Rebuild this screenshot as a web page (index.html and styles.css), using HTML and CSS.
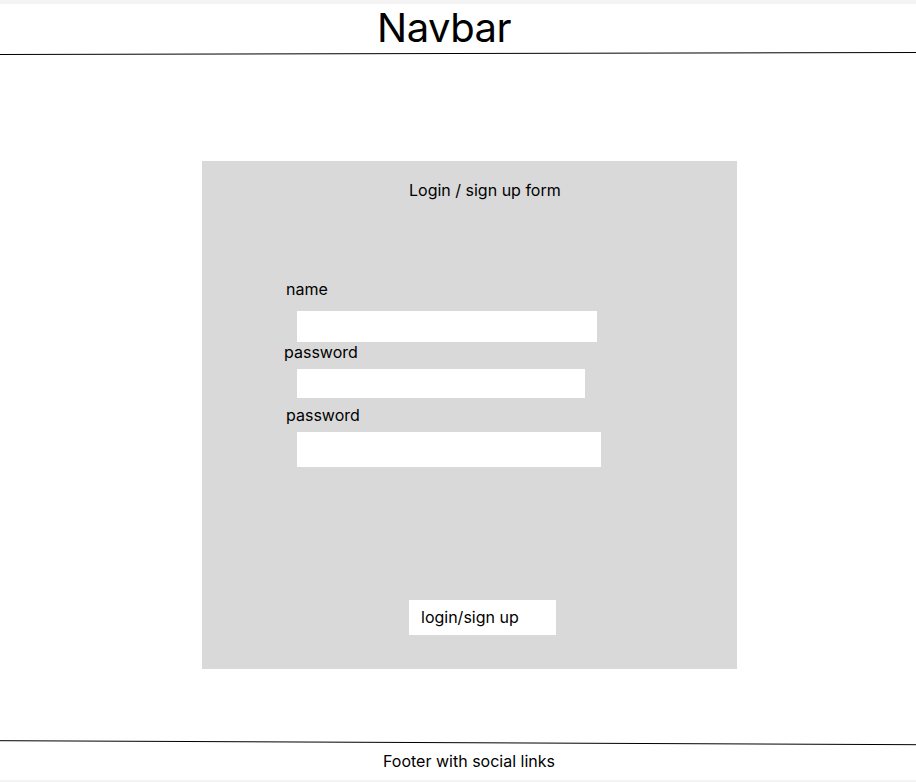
FILE: index.html
```html
<!DOCTYPE html>
<html>
<head>
<meta charset="utf-8">
<link rel="stylesheet" href="styles.css">
</head>
<body>
<div class="page">
  <div class="strip"></div>
  <header class="navbar">
    <div class="nav-title">Navbar</div>
  </header>
  <svg class="rule" width="916" height="4" viewBox="0 0 916 4"><line x1="0" y1="2.5" x2="916" y2="0.5" stroke="#000" stroke-width="1"/></svg>
  <main class="main">
    <section class="card">
      <div class="card-title">Login / sign up form</div>
      <div class="label label-name">name</div>
      <div class="input input-name"></div>
      <div class="label label-pw1">password</div>
      <div class="input input-pw1"></div>
      <div class="label label-pw2">password</div>
      <div class="input input-pw2"></div>
      <div class="button">login/sign up</div>
    </section>
  </main>
  <svg class="rule" width="916" height="6" viewBox="0 0 916 6"><line x1="0" y1="0.7" x2="916" y2="4.7" stroke="#000" stroke-width="1"/></svg>
  <footer class="footer">Footer with social links</footer>
  <div class="strip strip-bottom"></div>
</div>
</body>
</html>
```
FILE: styles.css
```css
html, body {
  margin: 0;
  padding: 0;
  background: #fff;
}
body {
  font-family: Inter, "Noto Sans", sans-serif;
  color: #000;
}
.page {
  width: 916px;
  height: 782px;
  display: flex;
  flex-direction: column;
  overflow: hidden;
}
.strip {
  height: 4px;
  background: #f4f4f4;
  flex: none;
}
.strip-bottom {
  height: 2px;
}
.navbar {
  height: 48px;
  flex: none;
  padding-left: 377px;
}
.nav-title {
  font-size: 40px;
  line-height: 48px;
  font-weight: 400;
  letter-spacing: -0.5px;
}
.rule {
  display: block;
  flex: none;
}
.main {
  flex: 1;
  padding-top: 105px;
  padding-left: 202px;
}
.card {
  width: 535px;
  height: 508px;
  background: #d9d9d9;
  display: flex;
  flex-direction: column;
  align-items: flex-start;
  font-size: 16px;
  line-height: 18px;
}
.card-title {
  margin-top: 20px;
  margin-left: 207px;
}
.label-name {
  margin-top: 81px;
  margin-left: 84px;
}
.input {
  background: #fff;
  margin-left: 95px;
}
.input-name {
  margin-top: 13px;
  width: 300px;
  height: 31px;
}
.label-pw1 {
  margin-top: 1px;
  margin-left: 82px;
}
.input-pw1 {
  margin-top: 8px;
  width: 288px;
  height: 29px;
}
.label-pw2 {
  margin-top: 8px;
  margin-left: 84px;
}
.input-pw2 {
  margin-top: 8px;
  width: 304px;
  height: 35px;
}
.button {
  margin-top: 133px;
  margin-left: 207px;
  width: 135px;
  height: 35px;
  padding-left: 12px;
  background: #fff;
  line-height: 35px;
}
.footer {
  height: 34px;
  flex: none;
  text-align: center;
  width: 938px;
  font-size: 16px;
  line-height: 24px;
  padding-top: 3px;
  box-sizing: border-box;
}
```
